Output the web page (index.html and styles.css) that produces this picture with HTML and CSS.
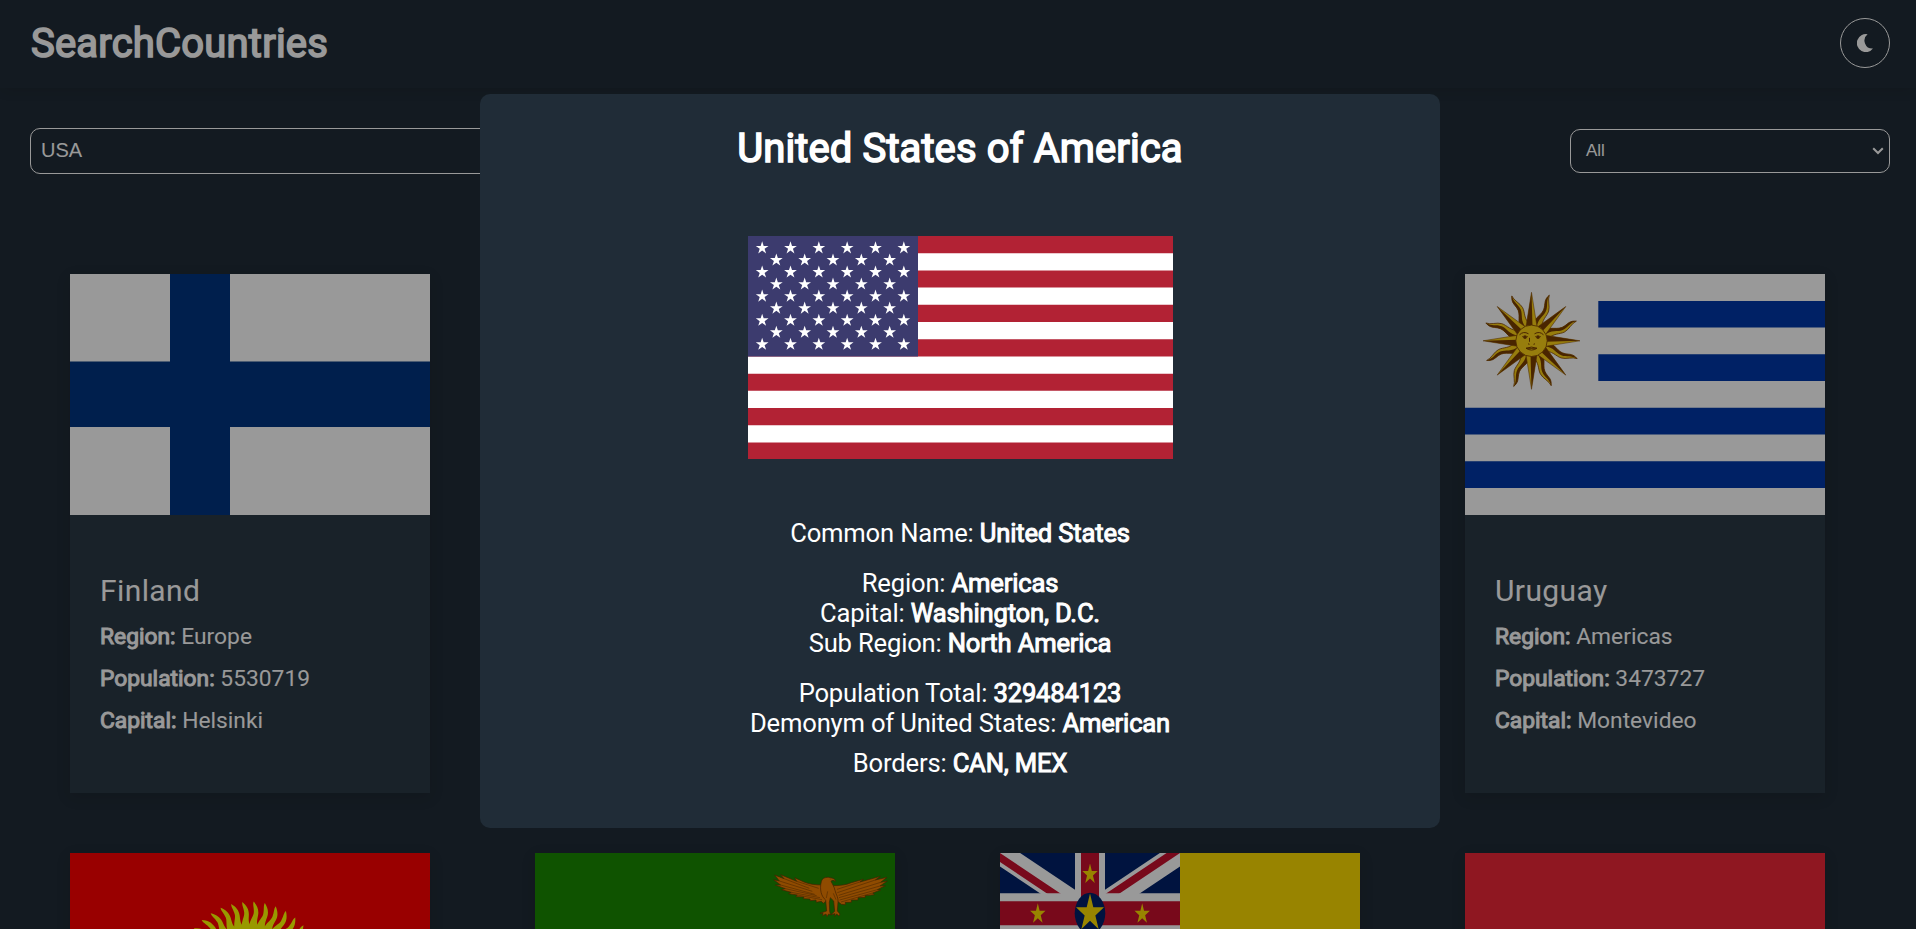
FILE: index.html
```html
<!DOCTYPE html>
<html lang="en">
<head>
<meta charset="utf-8">
<title>SearchCountries</title>
<link rel="stylesheet" href="styles.css">
</head>
<body>
<header class="header">
  <h1 class="brand">SearchCountries</h1>
  <button class="theme-toggle" aria-label="Theme">
    <svg class="moon" viewBox="0 0 16 18"><path d="M10.6 0.3A9 9 0 1 0 16 14.6A8 8 0 0 1 10.6 0.3Z"/></svg>
  </button>
</header>
<main class="main">
  <div class="filters">
    <div class="search">USA</div>
    <div class="select"><span>All</span>
      <svg class="chevron" viewBox="0 0 12 8"><path d="M1.2 1.2L6 6L10.8 1.2"/></svg>
    </div>
  </div>
  <section class="grid">
    <article class="card">
      <svg class="flag" viewBox="0 0 360 241" preserveAspectRatio="none">
        <path fill="#fff" d="M0 0H360V241H0Z"/><path fill="#003580" d="M0 87.500H360V153H0ZM100 0H160V241H100Z"/>
      </svg>
      <div class="info">
        <h2 class="name">Finland</h2>
        <p class="fact"><b>Region:</b> Europe</p>
        <p class="fact"><b>Population:</b> 5530719</p>
        <p class="fact"><b>Capital:</b> Helsinki</p>
      </div>
    </article>
    <article class="card card--end">
      <svg class="flag" viewBox="0 0 360 241" preserveAspectRatio="none">
        <defs>
          <g id="straight"><path fill="#fcd116" stroke="#7b3f00" stroke-width=".5" d="M-5.500 -14L0 -48.500L5.500 -14Z"/><path fill="#7b3f00" d="M0 -48.500L-5.500 -14H1Z"/></g>
          <g id="wavy"><path fill="#fcd116" stroke="#7b3f00" stroke-width=".7" d="M-5 -14C-7 -23 1 -28 -1 -36C-2 -41 -4 -43 -1 -49C-1 -44 4 -39 4.500 -34C5 -28 1 -24 5 -14Z"/><path fill="#7b3f00" d="M-5 -14C-7 -23 1 -28 -1 -36C-2 -41 -4 -43 -1 -49C-2 -42 2 -39 2 -33C2 -27 -3 -23 0 -14Z"/></g>
        </defs>
        <path fill="#fff" d="M0 0H360V241H0Z"/>
        <path fill="#0038a8" d="M133.300 27H360V53.500H133.300ZM133.300 80.300H360V107H133.300ZM0 133.700H360V160.500H0ZM0 187.300H360V214H0Z"/>
        <g transform="translate(66.500 66.800)">
          <use href="#wavy" transform="rotate(22.500)"/><use href="#wavy" transform="rotate(67.500)"/><use href="#wavy" transform="rotate(112.500)"/><use href="#wavy" transform="rotate(157.500)"/><use href="#wavy" transform="rotate(202.500)"/><use href="#wavy" transform="rotate(247.500)"/><use href="#wavy" transform="rotate(292.500)"/><use href="#wavy" transform="rotate(337.500)"/>
          <use href="#straight"/><use href="#straight" transform="rotate(45)"/><use href="#straight" transform="rotate(90)"/><use href="#straight" transform="rotate(135)"/><use href="#straight" transform="rotate(180)"/><use href="#straight" transform="rotate(225)"/><use href="#straight" transform="rotate(270)"/><use href="#straight" transform="rotate(315)"/>
          <circle r="15.700" fill="#fcd116" stroke="#7b3f00" stroke-width=".8"/>
          <g fill="none" stroke="#7b3f00" stroke-width="1"><path d="M-12 -6Q-8 -10 -3 -7M12 -6Q8 -10 3 -7"/><path d="M-9.500 -4Q-6.500 -6 -3.500 -4M9.500 -4Q6.500 -6 3.500 -4" stroke-width=".7"/><path d="M-3.500 3L-2 3.500M3.500 3L2 3.500M-2 -3V1M-5.500 7.500Q0 5 5.500 7.500Q0 11 -5.500 7.500H5.500"/></g>
          <circle cx="-6.500" cy="-3.500" r="1.700" fill="#7b3f00"/><circle cx="6.500" cy="-3.500" r="1.700" fill="#7b3f00"/>
        </g>
      </svg>
      <div class="info">
        <h2 class="name">Uruguay</h2>
        <p class="fact"><b>Region:</b> Americas</p>
        <p class="fact"><b>Population:</b> 3473727</p>
        <p class="fact"><b>Capital:</b> Montevideo</p>
      </div>
    </article>
    <article class="card">
      <svg class="flag" viewBox="0 0 360 241" preserveAspectRatio="none">
        <defs>
          <path id="ray" d="M-5 -46C-4 -54 -1 -57 -1 -61C-1 -66 -3 -69 -2 -72C2 -68 4 -64 3.500 -59C3 -54 2 -51 5 -46Z"/>
          <g id="rays"><use href="#ray" transform="rotate(-40.500)"/><use href="#ray" transform="rotate(-31.500)"/><use href="#ray" transform="rotate(-22.500)"/><use href="#ray" transform="rotate(-13.500)"/><use href="#ray" transform="rotate(-4.500)"/><use href="#ray" transform="rotate(4.500)"/><use href="#ray" transform="rotate(13.500)"/><use href="#ray" transform="rotate(22.500)"/><use href="#ray" transform="rotate(31.500)"/><use href="#ray" transform="rotate(40.500)"/></g>
        </defs>
        <path fill="#f00" d="M0 0H360V241H0Z"/>
        <g fill="#ff0" transform="translate(180 120.500)"><use href="#rays"/><use href="#rays" transform="rotate(90)"/><use href="#rays" transform="rotate(180)"/><use href="#rays" transform="rotate(270)"/><circle r="49"/></g>
      </svg>
    </article>
    <article class="card">
      <svg class="flag" viewBox="0 0 360 241" preserveAspectRatio="none">
        <path fill="#198a00" d="M0 0H360V241H0Z"/>
        <g transform="translate(225 -8) scale(.3333)" fill="#ef7d00" stroke="#6b3800" stroke-width="2" stroke-linejoin="round">
          <path d="M188 120C165 120 145 117 132 111L104 98L110 109L62 89L72 101L44 90L58 108L41 104L62 120L46 120L76 131L64 134L94 142L86 146L112 150L108 155L132 156L130 161L150 162L151 167L168 165L169 172L184 169L190 175L202 165Z"/>
          <path d="M219 122C240 122 258 120 274 113L310 103L300 111L361 94L346 105L381 97L362 112L382 108L360 123L376 122L352 134L362 135L338 144L343 149L315 152L316 157L294 158L294 165L274 165L274 172L256 172L256 179L244 178L229 166Z"/>
          <path d="M184 110C187 99 198 95 211 98C219 100 227 101 226 110C222 105 216 105 213 109C216 116 223 125 225 136C228 149 236 158 234 172L232 198L240 207L237 213L230 207L224 214L225 206L213 209L224 199L221 168L211 158L208 172L209 199L212 210L206 207L201 215L198 207L188 212L189 205L180 205L200 198L197 165C184 155 178 133 184 110Z"/>
          <path fill="none" stroke-width="1.500" d="M72 101L148 130M58 108L157 139M62 120L164 148M76 131L170 152M94 142L180 158M112 150L186 164M110 109L176 130M300 111L231 133M346 105L232 143M362 112L236 151M360 123L237 158M352 134L239 165M338 144L243 171M211 101V103M203 139L199 159M220 145L228 164"/>
        </g>
      </svg>
    </article>
    <article class="card">
      <svg class="flag" viewBox="0 0 120 60" preserveAspectRatio="none">
        <defs>
          <clipPath id="canton"><path d="M0 0H60V30H0Z"/></clipPath>
          <clipPath id="saltire"><path d="M30 15H60V30ZM30 15V30H0ZM30 15H0V0ZM30 15V0H60Z"/></clipPath>
          <polygon id="star" points="0,-1 .225,-.309 .951,-.309 .363,.118 .588,.809 0,.382 -.588,.809 -.363,.118 -.951,-.309 -.225,-.309"/>
        </defs>
        <path fill="#fedd00" d="M0 0H120V60H0Z"/>
        <g clip-path="url(#canton)">
          <path fill="#012169" d="M0 0H60V30H0Z"/>
          <path stroke="#fff" stroke-width="6" d="M0 0L60 30M60 0L0 30"/>
          <path stroke="#c8102e" stroke-width="4" clip-path="url(#saltire)" d="M0 0L60 30M60 0L0 30"/>
          <path stroke="#fff" stroke-width="10" d="M30 0V30M0 15H60"/>
          <path stroke="#c8102e" stroke-width="6" d="M30 0V30M0 15H60"/>
          <circle cx="30" cy="15" r="5.100" fill="#012169"/>
          <g fill="#fedd00"><use href="#star" transform="translate(30 15) scale(4.900)"/><use href="#star" transform="translate(30 5.300) scale(2.700)"/><use href="#star" transform="translate(12.600 15.200) scale(2.700)"/><use href="#star" transform="translate(47.400 15.200) scale(2.700)"/></g>
        </g>
      </svg>
    </article>
    <article class="card">
      <svg class="flag" viewBox="0 0 360 241" preserveAspectRatio="none"><path fill="#ee2737" d="M0 0H360V241H0Z"/></svg>
    </article>
  </section>
</main>
<div class="overlay">
  <section class="modal">
    <h2 class="modal-title">United States of America</h2>
    <svg class="modal-flag" viewBox="0 0 425 223.700" preserveAspectRatio="none">
      <defs>
        <g id="five"><use href="#star" transform="translate(28.333 0) scale(6.700)"/><use href="#star" transform="translate(56.667 0) scale(6.700)"/><use href="#star" transform="translate(85 0) scale(6.700)"/><use href="#star" transform="translate(113.333 0) scale(6.700)"/><use href="#star" transform="translate(141.667 0) scale(6.700)"/></g>
        <g id="six"><use href="#five" x="-14.167"/><use href="#star" transform="translate(155.833 0) scale(6.700)"/></g>
      </defs>
      <path fill="#b22234" d="M0 0H425V223.700H0Z"/>
      <path stroke="#fff" stroke-width="17.208" d="M0 25.810H425M0 60.230H425M0 94.640H425M0 129.060H425M0 163.470H425M0 197.890H425"/>
      <path fill="#3c3b6e" d="M0 0H170V120.450H0Z"/>
      <g fill="#fff"><use href="#six" y="12.050"/><use href="#five" y="24.100"/><use href="#six" y="36.150"/><use href="#five" y="48.200"/><use href="#six" y="60.250"/><use href="#five" y="72.300"/><use href="#six" y="84.350"/><use href="#five" y="96.400"/><use href="#six" y="108.450"/></g>
    </svg>
    <div class="details">
      <p>Common Name: <b>United States</b></p>
      <div class="group"><p>Region: <b>Americas</b></p><p>Capital: <b>Washington, D.C.</b></p><p>Sub Region: <b>North America</b></p></div>
      <div class="group"><p>Population Total: <b>329484123</b></p><p>Demonym of United States: <b>American</b></p></div>
      <p class="borders">Borders: <b>CAN, MEX</b></p>
    </div>
  </section>
</div>
</body>
</html>
```
FILE: styles.css
```css
* { box-sizing: border-box; margin: 0; padding: 0; }
html, body { height: 929px; overflow: hidden; }
body { background: #202c37; color: #fff; font-family: Roboto, sans-serif; }
svg { display: block; }
b { font-weight: 400; -webkit-text-stroke: 1px currentColor; }

.header { height: 88px; padding: 0 26px 0 30px; display: flex; justify-content: space-between; align-items: center; box-shadow: 0 5px 12px -3px rgba(0, 0, 0, .12); }
.brand { padding: 0 0 2px 1px; font-size: 40px; line-height: 47px; font-weight: 400; letter-spacing: .2px; -webkit-text-stroke: 1.6px currentColor; }
.theme-toggle { width: 50px; height: 50px; margin-top: -2px; display: flex; align-items: center; justify-content: center; border: 1px solid #fff; border-radius: 50%; background: none; }
.moon { width: 16px; height: 18px; fill: #fff; }

.main { height: 841px; overflow: hidden; }
.filters { display: flex; justify-content: space-between; align-items: center; padding: 40px 26px 0 30px; }
.search { width: 600px; height: 46px; padding: 0 10px; border: 1px solid #fff; border-radius: 10px; font: 20px/42px "Liberation Sans", sans-serif; }
.select { width: 320px; height: 44px; padding: 0 5px 0 15px; display: flex; align-items: center; justify-content: space-between; border: 1px solid #fff; border-radius: 10px; font: 17px/42px "Liberation Sans", sans-serif; }
.chevron { width: 12px; height: 8px; fill: none; stroke: #fff; stroke-width: 2; }

.grid { display: grid; grid-template-columns: repeat(4, 360px); column-gap: 105px; row-gap: 60px; padding: 100px 0 0 70px; }
.card { height: 519px; background: #2b3945; box-shadow: 0 4px 14px rgba(0, 0, 0, .12); }
.card--end { grid-column: 4; }
.flag { width: 360px; height: 241px; }
.info { padding: 58px 30px 0; }
.name { font-size: 30px; line-height: 36px; font-weight: 400; letter-spacing: .4px; margin-bottom: 14px; }
.fact { font-size: 22.8px; line-height: 28px; margin-bottom: 14px; }

.overlay { position: fixed; inset: 0; background: rgba(0, 0, 0, .4); display: flex; justify-content: center; align-items: flex-start; padding: 94px 0 0 4px; }
.modal { width: 960px; height: 734px; border-radius: 10px; background: #202c37; display: flex; flex-direction: column; align-items: center; padding-top: 31px; }
.modal-title { font-size: 40px; line-height: 47px; font-weight: 400; letter-spacing: .1px; -webkit-text-stroke: 1.6px currentColor; }
.modal-flag { width: 425px; height: 223.7px; margin-top: 63.6px; }
.details { margin-top: 58.7px; text-align: center; font-size: 25.6px; line-height: 30px; letter-spacing: -.18px; }
.group { margin-top: 20px; }
.borders { margin-top: 10px; }
```
